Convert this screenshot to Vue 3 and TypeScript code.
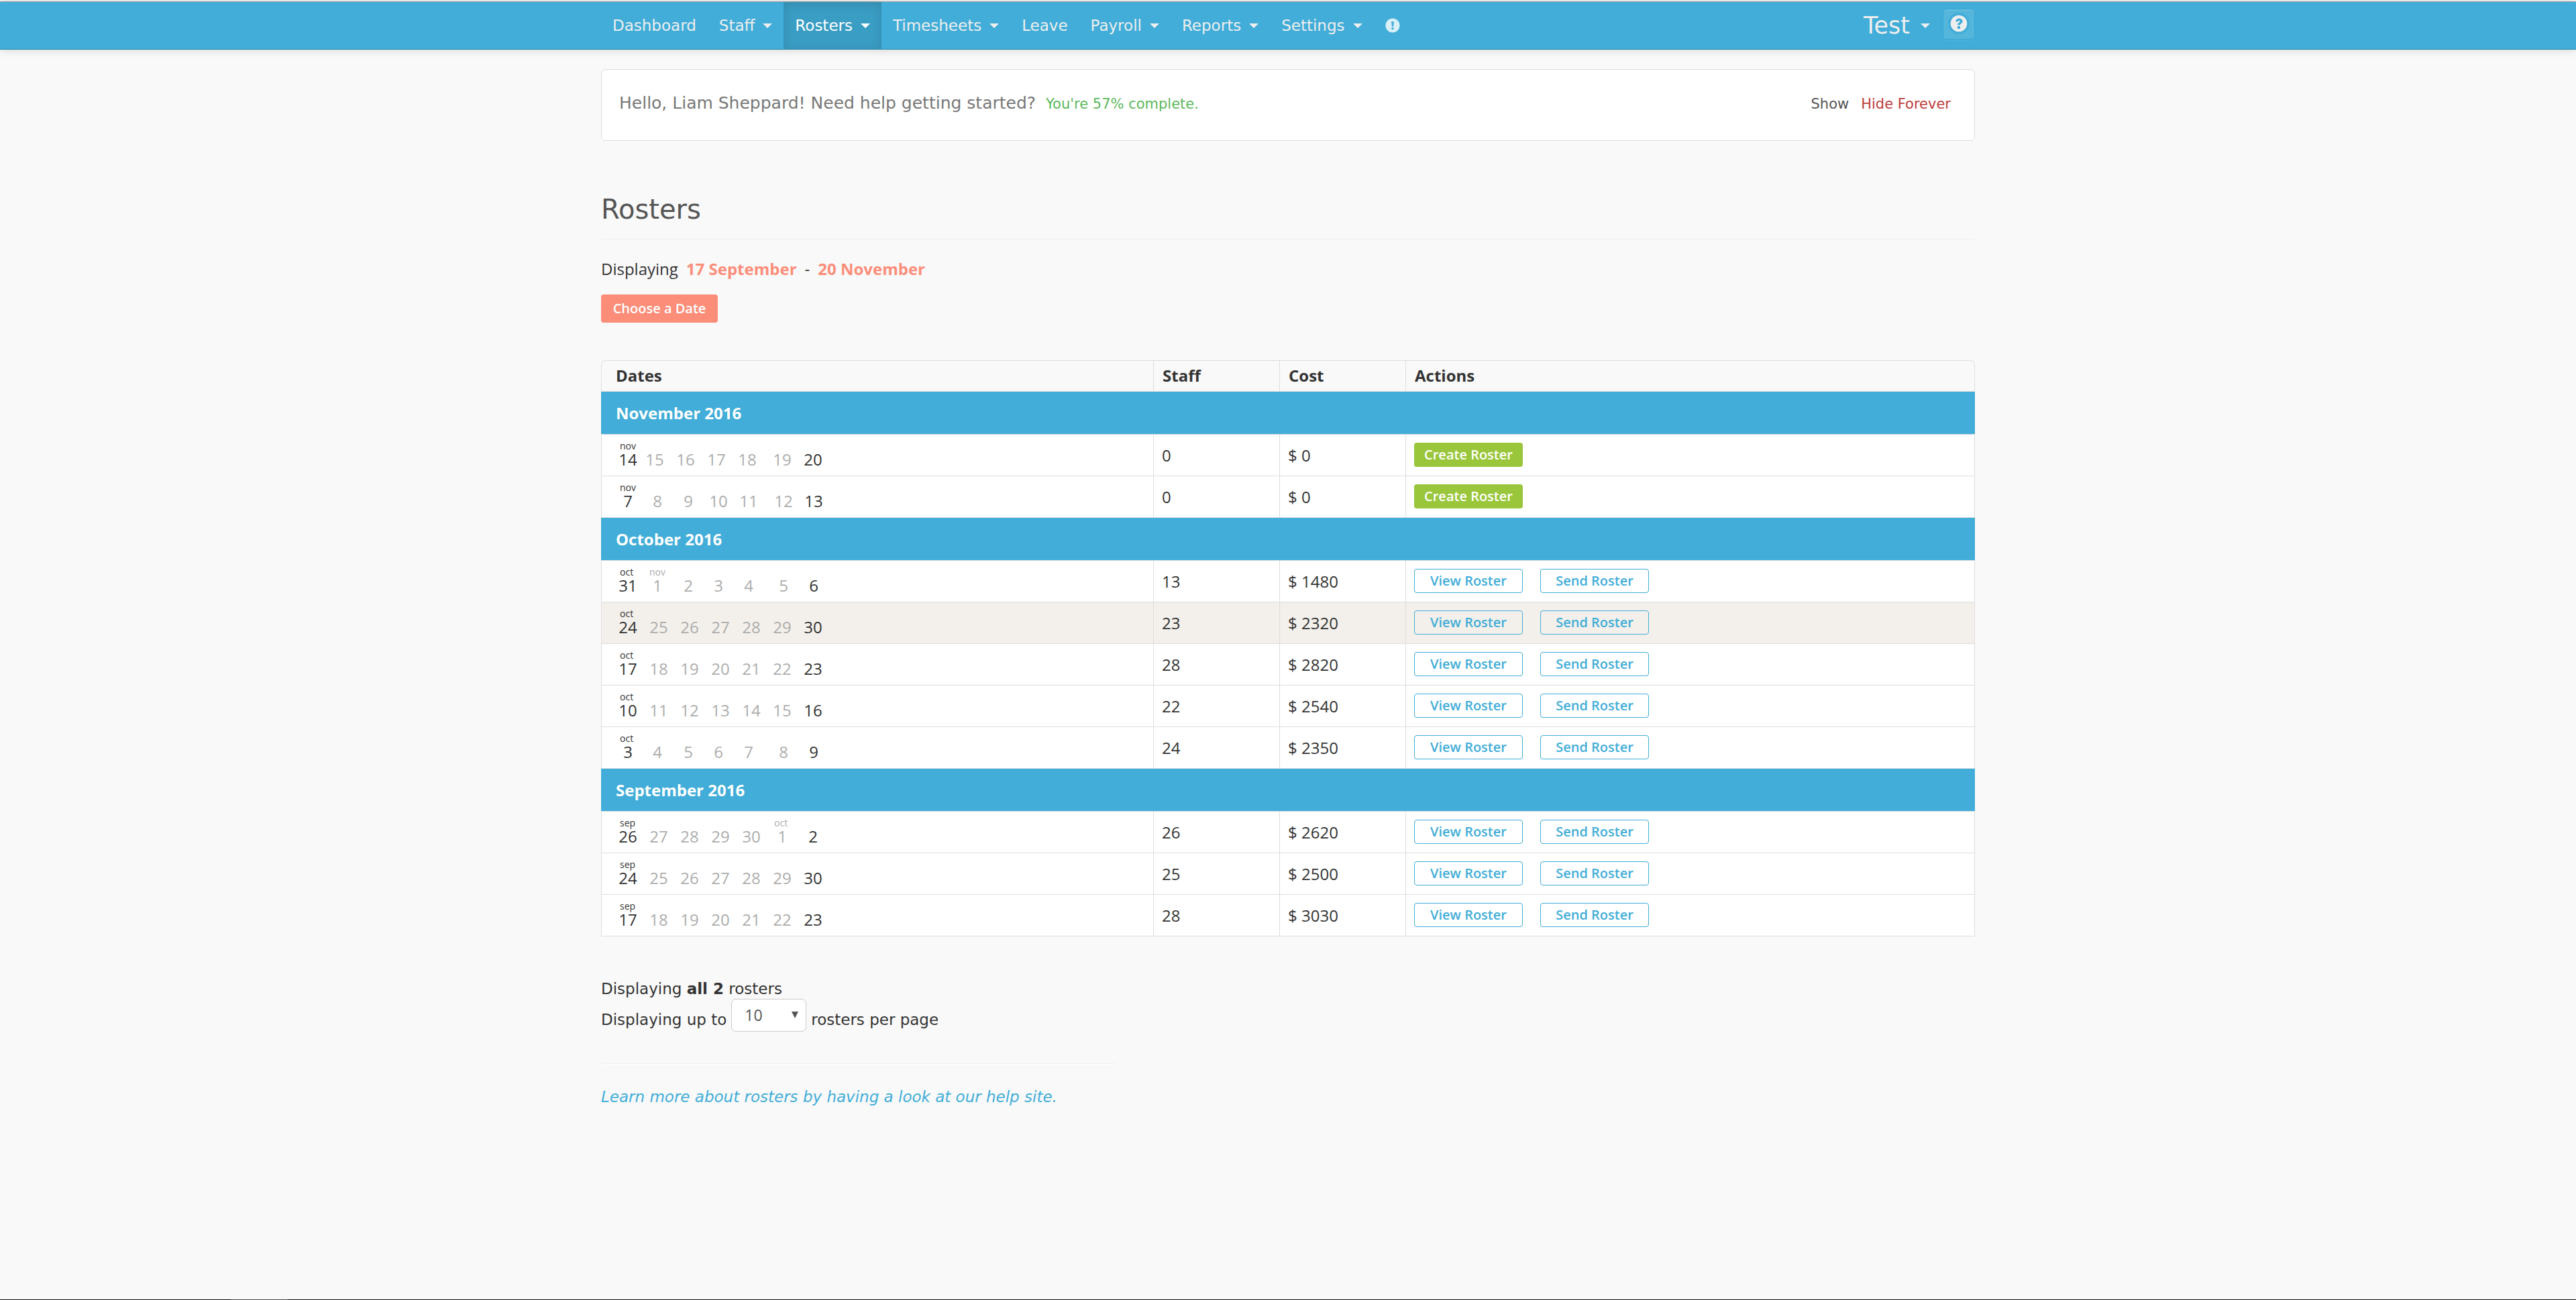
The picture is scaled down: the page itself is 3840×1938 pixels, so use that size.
<script setup lang="ts">
import { ref } from 'vue'

interface NavItem {
  label: string
  menu: boolean
  active?: boolean
}

interface Day {
  date: number
  month?: string
}

interface RosterWeek {
  days: Day[]
  spacing?: 'tight' | 'mixed'
  staff: number
  cost: number
  created: boolean
  highlighted?: boolean
}

interface MonthGroup {
  title: string
  weeks: RosterWeek[]
}

const navItems: NavItem[] = [
  { label: 'Dashboard', menu: false },
  { label: 'Staff', menu: true },
  { label: 'Rosters', menu: true, active: true },
  { label: 'Timesheets', menu: true },
  { label: 'Leave', menu: false },
  { label: 'Payroll', menu: true },
  { label: 'Reports', menu: true },
  { label: 'Settings', menu: true },
]

// Builds the seven days of a week; the month is named on the first day and where it changes.
function week(month: string, start: number, length = 31, next = ''): Day[] {
  return Array.from({ length: 7 }, (_, i) => {
    const date = start + i
    if (date > length) {
      return { date: date - length, month: date - length === 1 ? next : undefined }
    }
    return { date, month: i === 0 ? month : undefined }
  })
}

const months: MonthGroup[] = [
  {
    title: 'November 2016',
    weeks: [
      { days: week('nov', 14), spacing: 'tight', staff: 0, cost: 0, created: false },
      { days: week('nov', 7), spacing: 'mixed', staff: 0, cost: 0, created: false },
    ],
  },
  {
    title: 'October 2016',
    weeks: [
      { days: week('oct', 31, 31, 'nov'), spacing: 'mixed', staff: 13, cost: 1480, created: true },
      { days: week('oct', 24), staff: 23, cost: 2320, created: true, highlighted: true },
      { days: week('oct', 17), staff: 28, cost: 2820, created: true },
      { days: week('oct', 10), staff: 22, cost: 2540, created: true },
      { days: week('oct', 3), spacing: 'mixed', staff: 24, cost: 2350, created: true },
    ],
  },
  {
    title: 'September 2016',
    weeks: [
      { days: week('sep', 26, 30, 'oct'), staff: 26, cost: 2620, created: true },
      { days: week('sep', 24), staff: 25, cost: 2500, created: true },
      { days: week('sep', 17), staff: 28, cost: 3030, created: true },
    ],
  },
]

const perPage = ref('10')
</script>

<template>
  <div class="page">
    <div class="window-edge"></div>
    <header class="navbar">
      <div class="container navbar-inner">
        <nav class="nav" aria-label="Main">
          <a
            v-for="item in navItems"
            :key="item.label"
            href="#"
            class="nav-link"
            :class="{ active: item.active }"
          >
            {{ item.label }}
            <span v-if="item.menu" class="caret"></span>
          </a>
          <a href="#" class="nav-link" aria-label="Notices">
            <svg class="notice-icon" viewBox="0 0 22 22" aria-hidden="true">
              <circle cx="11" cy="11" r="10.6" fill="#d9eff8" />
              <path d="M9.2 5h3.6l-.5 7.4H9.7zM9.4 14h3.2v3H9.4z" fill="#41add8" />
            </svg>
          </a>
        </nav>
        <div class="account">
          <a href="#" class="account-link">Test <span class="caret"></span></a>
          <button type="button" class="help-button" aria-label="Help">
            <svg viewBox="0 0 32 32" aria-hidden="true">
              <circle cx="16" cy="16" r="16" fill="#41add8" />
              <circle cx="16" cy="16" r="12.3" fill="#eeeeee" />
              <path
                d="M11.2 13c.5-3 2.4-4.6 5.2-4.6 3 0 5.2 1.7 5.2 4.3 0 3.4-3.7 3.4-3.7 5.8h-3.8c0-3.9 3.5-3.9 3.5-5.5 0-.8-.6-1.2-1.3-1.2-.9 0-1.4.6-1.7 1.8z"
                fill="#41add8"
              />
              <rect x="14" y="20" width="4" height="4" fill="#41add8" />
            </svg>
          </button>
        </div>
      </div>
    </header>

    <main class="container">
      <section class="welcome">
        <span class="greeting">Hello, Liam Sheppard! Need help getting started?</span>
        <span class="progress">You're 57% complete.</span>
        <span class="welcome-actions">
          <a href="#" class="show-link">Show</a>
          <a href="#" class="hide-link">Hide Forever</a>
        </span>
      </section>

      <h1>Rosters</h1>

      <p class="range">
        <span>Displaying</span>
        <strong>17 September</strong>
        <span>-</span>
        <strong>20 November</strong>
      </p>
      <button type="button" class="btn btn-date">Choose a Date</button>

      <table class="rosters">
        <colgroup>
          <col />
          <col class="col-number" />
          <col class="col-number" />
          <col class="col-actions" />
        </colgroup>
        <thead>
          <tr>
            <th scope="col">Dates</th>
            <th scope="col">Staff</th>
            <th scope="col">Cost</th>
            <th scope="col">Actions</th>
          </tr>
        </thead>
        <tbody v-for="group in months" :key="group.title">
          <tr>
            <th class="month" colspan="4" scope="rowgroup">{{ group.title }}</th>
          </tr>
          <tr
            v-for="(row, index) in group.weeks"
            :key="index"
            :class="{ highlighted: row.highlighted }"
          >
            <td>
              <div class="days" :class="row.spacing">
                <span v-for="day in row.days" :key="day.date" class="day">
                  <span class="day-month">{{ day.month }}</span>
                  <span class="day-date">{{ day.date }}</span>
                </span>
              </div>
            </td>
            <td>{{ row.staff }}</td>
            <td>$ {{ row.cost }}</td>
            <td>
              <div class="actions">
                <template v-if="row.created">
                  <button type="button" class="btn btn-outline">View Roster</button>
                  <button type="button" class="btn btn-outline">Send Roster</button>
                </template>
                <button v-else type="button" class="btn btn-create">Create Roster</button>
              </div>
            </td>
          </tr>
        </tbody>
      </table>

      <section class="summary">
        <p>Displaying <strong>all 2</strong> rosters</p>
        <div class="per-page">
          <label for="per-page">Displaying up to</label>
          <span class="select">
            <select id="per-page" v-model="perPage">
              <option>10</option>
              <option>25</option>
              <option>50</option>
            </select>
          </span>
          <span>rosters per page</span>
        </div>
        <hr />
        <a href="#" class="help-link">Learn more about rosters by having a look at our help site.</a>
      </section>
    </main>

    <footer class="taskbar"><span class="task"></span></footer>
  </div>
</template>

<style>
body {
  margin: 0;
  background: #f9f9f9;
}
</style>

<style scoped>
.page {
  --blue: #41add8;
  --line: #dddddd;
  --verdana: Verdana, "DejaVu Sans", sans-serif;
  --sans: "Open Sans", "Noto Sans", sans-serif;
  box-sizing: border-box;
  min-height: 100vh;
  display: flex;
  flex-direction: column;
  background: #f9f9f9;
  color: #333333;
  font: 24px/30px var(--sans);
}

.page *,
.page *::after {
  box-sizing: border-box;
}

a {
  text-decoration: none;
}

p {
  margin: 0;
}

.container {
  width: 100%;
  max-width: 2048px;
  margin: 0 auto;
}

.window-edge {
  height: 3px;
  background: #f3f3f3;
  border-bottom: 1px solid #a8a8a8;
}

.navbar {
  background: var(--blue);
  border-bottom: 1px solid #2188b0;
  box-shadow: 0 1px 12px rgba(0, 0, 0, 0.15);
}

.navbar-inner {
  display: flex;
  justify-content: space-between;
}

.nav {
  display: flex;
}

.nav-link {
  display: flex;
  align-items: center;
  gap: 12px;
  height: 70px;
  padding: 0 17px;
  color: #eeeeee;
  font: 23px/30px var(--verdana);
}

.nav-link.active {
  background: #3a9dc4;
  box-shadow: inset 0 3px 16px rgba(0, 0, 0, 0.125);
  color: #ffffff;
}

.caret {
  border: 7px solid transparent;
  border-top-color: currentColor;
  border-bottom: 0;
}

.notice-icon {
  width: 22px;
  height: 22px;
}

.account {
  display: flex;
  align-items: center;
}

.account-link {
  display: flex;
  align-items: center;
  gap: 16px;
  padding: 0 19px;
  color: #eeeeee;
  font: 35px/50px var(--verdana);
}

.help-button {
  display: flex;
  align-items: center;
  justify-content: center;
  align-self: flex-start;
  width: 48px;
  height: 46px;
  margin: 10px 0;
  padding: 0 0 3px;
  border: 1px solid #38a5d1;
  border-radius: 6px;
  background: #55b6dc;
  box-shadow: inset 0 2px 0 rgba(255, 255, 255, 0.1), 0 2px 0 rgba(255, 255, 255, 0.05);
}

.help-button svg {
  width: 32px;
  height: 32px;
}

.welcome {
  display: flex;
  align-items: baseline;
  margin-top: 29px;
  padding: 32px 35px 36px 26px;
  border: 1px solid var(--line);
  border-radius: 7px;
  background: #ffffff;
  font: 21px/36px var(--verdana);
}

.greeting {
  font-size: 25px;
  color: #777777;
}

.progress {
  margin-left: 15px;
  color: #5cb85c;
}

.welcome-actions {
  display: flex;
  gap: 18px;
  margin-left: auto;
}

.show-link {
  color: #555555;
}

.hide-link {
  color: #bd3c3a;
}

h1 {
  margin: 77px 0 29px;
  padding-bottom: 19px;
  border-bottom: 1px solid #eeeeee;
  color: #555555;
  font: 40px/50px var(--verdana);
}

.range {
  display: flex;
  gap: 12px;
  margin-bottom: 23px;
}

.range strong {
  color: #fc8d79;
}

.btn {
  width: 162px;
  height: 36px;
  padding: 0;
  border: 0;
  border-radius: 4px;
  color: #ffffff;
  font: 600 20px/30px var(--sans);
}

.btn-date {
  width: 174px;
  height: 42px;
  background: #fc8d79;
}

.btn-create {
  background: #9ac63b;
}

.btn-outline {
  border: 1px solid var(--blue);
  background: transparent;
  color: var(--blue);
}

.rosters {
  width: 100%;
  margin-top: 56px;
  border-spacing: 0;
  table-layout: fixed;
}

.col-number {
  width: 188px;
}

.col-actions {
  width: 849px;
}

th,
td {
  height: 62px;
  padding: 0 12px;
  border-top: 1px solid var(--line);
  border-left: 1px solid var(--line);
  text-align: left;
  vertical-align: middle;
}

th:last-child,
td:last-child {
  border-right: 1px solid var(--line);
}

td {
  background: #ffffff;
}

thead th {
  height: 46px;
  padding: 0 13px 2px;
}

thead th:first-child {
  padding-left: 21px;
  border-top-left-radius: 7px;
}

thead th:last-child {
  border-top-right-radius: 7px;
}

td:first-child {
  padding-left: 25px;
}

th.month {
  height: 64px;
  padding-left: 22px;
  border-right: 0;
  border-left: 0;
  background: var(--blue);
  background-clip: padding-box;
  color: #ffffff;
}

tbody:last-child tr:last-child td {
  height: 63px;
  border-bottom: 1px solid var(--line);
}

.highlighted td {
  background: #f3f0eb;
}

.days {
  display: grid;
  grid-template-columns: repeat(7, 46px);
}

.days.tight {
  grid-template-columns: 40px 46px 46px 46px 52px 46px 46px;
}

.days.mixed {
  grid-template-columns: 44px 46px 45px 45px 52px 45px 46px;
}

.day {
  display: flex;
  flex-direction: column;
  width: 28px;
  padding-bottom: 3px;
  color: #adadad;
}

.day:first-child,
.day:last-child {
  color: #333333;
}

.day-month {
  height: 16px;
  padding-left: 2px;
  font-size: 14px;
  line-height: 16px;
}

.day-date {
  line-height: 24px;
  text-align: center;
}

.actions {
  display: flex;
  gap: 26px;
  padding-bottom: 1px;
}

.summary {
  margin-top: 63px;
  font: 23px/30px var(--verdana);
}

.per-page {
  display: flex;
  align-items: flex-end;
  gap: 7px;
  line-height: 36px;
}

.select {
  position: relative;
  display: flex;
}

.select::after {
  content: "";
  position: absolute;
  top: 19px;
  right: 12px;
  border: 5px solid transparent;
  border-top: 10px solid #555555;
  border-bottom: 0;
  pointer-events: none;
}

select {
  appearance: none;
  width: 112px;
  height: 49px;
  padding: 0 19px 2px;
  border: 1px solid #cccccc;
  border-radius: 7px;
  background: #ffffff;
  color: #555555;
  font: 23px/30px var(--sans);
}

hr {
  width: 768px;
  max-width: 100%;
  margin: 47px auto 33px 0;
  border: 0;
  border-top: 1px solid #eeeeee;
  border-bottom: 1px solid #ffffff;
}

.help-link {
  color: var(--blue);
  font-style: italic;
}

.taskbar {
  display: flex;
  height: 1px;
  margin-top: auto;
  padding-left: 344px;
  background: #111111;
}

.task {
  width: 85px;
  background: #444444;
}
</style>
